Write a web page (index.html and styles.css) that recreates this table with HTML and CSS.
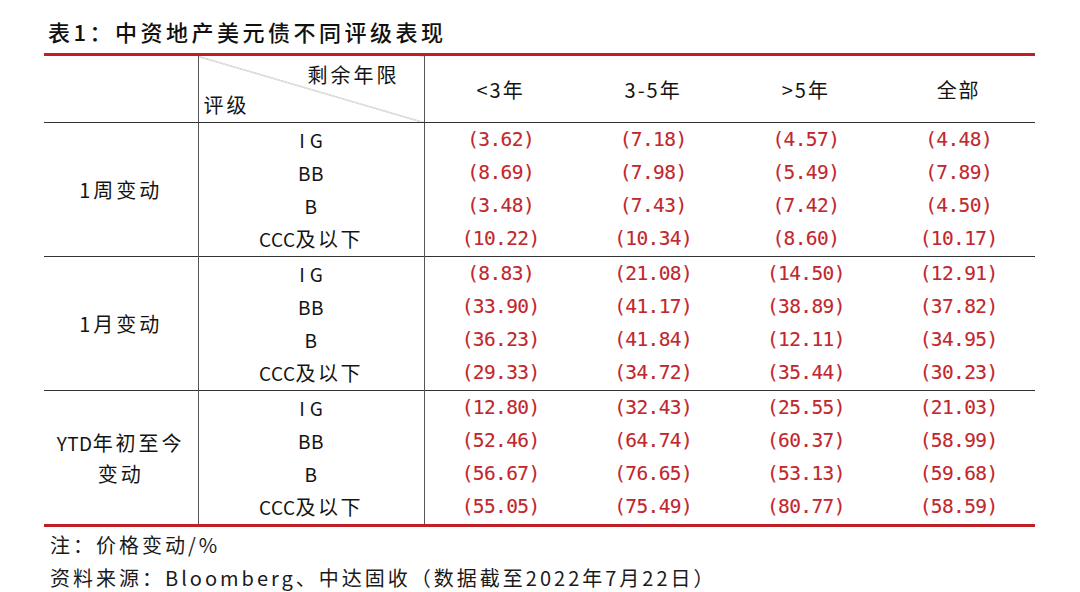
FILE: index.html
```html
<!DOCTYPE html>
<html lang="zh-CN">
<head>
<meta charset="utf-8">
<title>表1：中资地产美元债不同评级表现</title>
<link rel="stylesheet" href="styles.css">
</head>
<body>
<div class="page">
  <h1 class="title">表1：中资地产美元债不同评级表现</h1>
  <table class="tbl">
    <colgroup>
      <col class="c-group">
      <col class="c-rating">
      <col class="c-val">
      <col class="c-val">
      <col class="c-val">
      <col class="c-val">
    </colgroup>
    <thead>
      <tr class="head">
        <th class="blank"></th>
        <th class="diag">
          <div class="diag-inner">
            <span class="dg-top">剩余年限</span>
            <span class="dg-bot">评级</span>
          </div>
        </th>
        <th class="hd">&lt;3年</th>
        <th class="hd">3-5年</th>
        <th class="hd">&gt;5年</th>
        <th class="hd">全部</th>
      </tr>
    </thead>
    <tbody class="grp">
      <tr><td class="label" rowspan="4">1周变动</td><td class="rt ig">IG</td><td class="v">(3.62)</td><td class="v">(7.18)</td><td class="v">(4.57)</td><td class="v">(4.48)</td></tr>
      <tr><td class="rt lat">BB</td><td class="v">(8.69)</td><td class="v">(7.98)</td><td class="v">(5.49)</td><td class="v">(7.89)</td></tr>
      <tr><td class="rt lat">B</td><td class="v">(3.48)</td><td class="v">(7.43)</td><td class="v">(7.42)</td><td class="v">(4.50)</td></tr>
      <tr><td class="rt"><span class="lat">CCC</span>及以下</td><td class="v">(10.22)</td><td class="v">(10.34)</td><td class="v">(8.60)</td><td class="v">(10.17)</td></tr>
    </tbody>
    <tbody class="grp">
      <tr><td class="label" rowspan="4">1月变动</td><td class="rt ig">IG</td><td class="v">(8.83)</td><td class="v">(21.08)</td><td class="v">(14.50)</td><td class="v">(12.91)</td></tr>
      <tr><td class="rt lat">BB</td><td class="v">(33.90)</td><td class="v">(41.17)</td><td class="v">(38.89)</td><td class="v">(37.82)</td></tr>
      <tr><td class="rt lat">B</td><td class="v">(36.23)</td><td class="v">(41.84)</td><td class="v">(12.11)</td><td class="v">(34.95)</td></tr>
      <tr><td class="rt"><span class="lat">CCC</span>及以下</td><td class="v">(29.33)</td><td class="v">(34.72)</td><td class="v">(35.44)</td><td class="v">(30.23)</td></tr>
    </tbody>
    <tbody class="grp">
      <tr><td class="label" rowspan="4"><span class="lat">YTD</span>年初至今<br>变动</td><td class="rt ig">IG</td><td class="v">(12.80)</td><td class="v">(32.43)</td><td class="v">(25.55)</td><td class="v">(21.03)</td></tr>
      <tr><td class="rt lat">BB</td><td class="v">(52.46)</td><td class="v">(64.74)</td><td class="v">(60.37)</td><td class="v">(58.99)</td></tr>
      <tr><td class="rt lat">B</td><td class="v">(56.67)</td><td class="v">(76.65)</td><td class="v">(53.13)</td><td class="v">(59.68)</td></tr>
      <tr><td class="rt"><span class="lat">CCC</span>及以下</td><td class="v">(55.05)</td><td class="v">(75.49)</td><td class="v">(80.77)</td><td class="v">(58.59)</td></tr>
    </tbody>
  </table>
  <div class="notes">
    <p class="note">注：价格变动/%</p>
    <p class="note">资料来源：Bloomberg、中达固收（数据截至2022年7月22日）</p>
  </div>
</div>
</body>
</html>
```

FILE: styles.css
```css
html, body {
  margin: 0;
  padding: 0;
  background: #ffffff;
}

body {
  font-family: "Noto Sans CJK SC", "Noto Sans", sans-serif;
  color: #141414;
}

.page {
  padding: 16px 45px 0 44px;
}

.title {
  margin: 0 0 7px 4px;
  font-size: 22px;
  line-height: 30px;
  font-weight: 500;
  letter-spacing: 3.5px;
  color: #111111;
}

.tbl {
  width: 991px;
  border-collapse: collapse;
  table-layout: fixed;
  border-top: 3px solid #be2026;
  border-bottom: 3px solid #be2026;
}

.c-group { width: 154px; }
.c-rating { width: 226px; }
.c-val { width: 152.75px; }

.tbl th,
.tbl td {
  padding: 0;
  text-align: center;
  vertical-align: middle;
  font-weight: 400;
  white-space: nowrap;
}

.head th {
  height: 66px;
  border-bottom: 1px solid #333333;
  font-size: 20px;
  letter-spacing: 2px;
}

.blank,
.diag,
.label,
.rt {
  border-right: 1px solid #555555;
}

.diag {
  background: linear-gradient(to top right,
    transparent calc(50% - 0.7px),
    #a8a8a8 50%,
    transparent calc(50% + 0.7px));
}

.diag-inner {
  height: 66px;
  display: flex;
  flex-direction: column;
  justify-content: space-between;
  padding: 7px 0 5px 0;
  box-sizing: border-box;
  font-size: 20px;
  line-height: 24px;
  letter-spacing: 3px;
}

.dg-top {
  align-self: flex-end;
  margin-right: 24px;
}

.dg-bot {
  align-self: flex-start;
  margin-left: 5px;
}

.grp {
  border-top: 1px solid #333333;
}

.grp td {
  height: 33.25px;
  line-height: 26px;
}

.label {
  font-size: 20px;
  letter-spacing: 3px;
  line-height: 31px !important;
}

.rt {
  font-size: 20px;
  letter-spacing: 2.5px;
}

.lat {
  font-size: 19px;
  letter-spacing: 0.5px;
}

.ig {
  font-size: 19px;
  letter-spacing: 5px;
  text-indent: 5px;
}

.v {
  font-family: "DejaVu Sans Mono", "Noto Sans CJK SC", monospace;
  font-size: 19.5px;
  letter-spacing: -0.6px;
  color: #c1272d;
  -webkit-text-stroke: 0.12px #c1272d;
}

.notes {
  margin-top: 1px;
  padding-left: 6px;
}

.note {
  margin: 0;
  font-size: 20px;
  line-height: 33px;
  letter-spacing: 3px;
  color: #1a1a1a;
}
```
